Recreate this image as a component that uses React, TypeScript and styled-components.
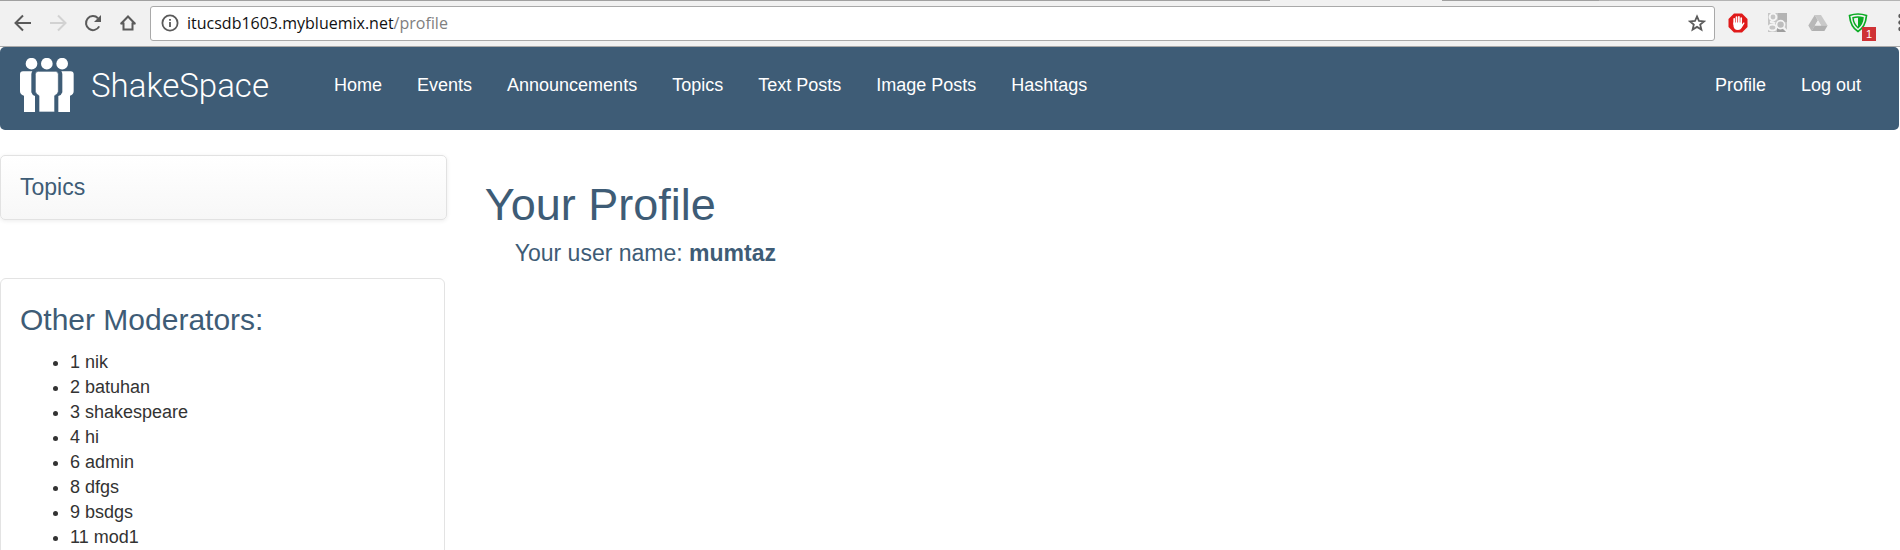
import React from "react";
import styled, { createGlobalStyle } from "styled-components";

const BLUE = "#3e5c76";
const UI_FONT = '"Liberation Sans", Arial, Helvetica, sans-serif';

const GlobalStyle = createGlobalStyle`
  *, *::before, *::after { box-sizing: border-box; }
  body {
    margin: 0;
    background: #fff;
    color: #333;
    font: 18px/25px ${UI_FONT};
  }
`;

const Page = styled.div`
  height: 100vh;
  overflow: hidden;
`;

/* Browser chrome */

const TabStrip = styled.div`
  display: flex;
  height: 1px;
  background: #f1f1f1;
`;

const TabEdge = styled.div<{ $grow: number; $color: string }>`
  flex: ${(p) => p.$grow} 1 0;
  background: ${(p) => p.$color};
`;

const BrowserBar = styled.div`
  display: flex;
  align-items: center;
  height: 46px;
  padding: 0 0 1px 14px;
  background: #f1f1f1;
  border-bottom: 1px solid #a9a9a9;
  overflow: hidden;
`;

const NavButtons = styled.div`
  display: flex;
  gap: 17px;
  margin-right: 13px;
`;

const IconButton = styled.button`
  position: relative;
  display: block;
  flex: none;
  padding: 0;
  border: 0;
  background: none;
  line-height: 0;
`;

const AddressBar = styled.form`
  display: flex;
  flex: 1;
  align-items: center;
  height: 35px;
  padding: 0 8px 0 10px;
  background: #fff;
  border: 1px solid #a9a9a9;
  border-radius: 3px;
  font: 16px/24px "Open Sans", "Noto Sans", sans-serif;
`;

const Host = styled.label`
  margin-left: 8px;
  color: #111;
`;

const PathInput = styled.input`
  flex: 1;
  min-width: 0;
  padding: 0;
  border: 0;
  outline: 0;
  background: none;
  color: #808080;
  font: inherit;
`;

const Extensions = styled.div`
  display: flex;
  gap: 20px;
  margin: 0 30px 0 13px;
`;

const Count = styled.span`
  position: absolute;
  right: -8px;
  bottom: -8px;
  width: 14px;
  background: #cf3235;
  color: #fff;
  font: 11px/14px ${UI_FONT};
  text-align: center;
`;

const MenuButton = styled(IconButton)`
  margin-right: -3px;
`;

/* Site */

const Site = styled.div`
  padding-right: 1px;
`;

const Navbar = styled.nav`
  display: flex;
  align-items: flex-start;
  height: 83px;
  padding: 11px 38px 0 20px;
  background: ${BLUE};
  border-radius: 5px;
`;

const Brand = styled.a`
  display: flex;
  gap: 17px;
  width: 314px;
  color: #fff;
  font: 300 33px/56px Roboto, sans-serif;
  text-decoration: none;
`;

const Links = styled.ul<{ $end?: boolean }>`
  display: flex;
  gap: 35px;
  margin: 15px 0 0 ${(p) => (p.$end ? "auto" : "0")};
  padding: 0;
  list-style: none;
`;

const NavLink = styled.a`
  color: #fff;
  text-decoration: none;
  white-space: nowrap;
`;

const Columns = styled.div`
  display: grid;
  grid-template-columns: 1fr 3fr;
  padding-top: 25px;
`;

const Sidebar = styled.aside`
  padding-right: 28px;
`;

const TopicsPanel = styled.section`
  padding: 19px;
  border: 1px solid #e2e2e2;
  border-radius: 5px;
  background: linear-gradient(#fff, #f7f7f7);
  box-shadow: 0 1px 4px rgba(0, 0, 0, 0.08);
`;

const ModeratorsPanel = styled.section`
  margin: 58px 2px 0 0;
  padding: 24px 19px;
  border: 1px solid #e3e3e3;
  border-radius: 6px;
`;

const Heading = styled.h3<{ $size: number; $line: number }>`
  margin: 0;
  color: ${BLUE};
  font-size: ${(p) => p.$size}px;
  line-height: ${(p) => p.$line}px;
  font-weight: 400;
`;

const ModeratorList = styled.ul`
  margin: 13px 0 0;
  padding-left: 50px;
`;

const Profile = styled.main`
  padding: 25px 10px;
`;

const UserName = styled(Heading)`
  margin: 11px 0 0 30px;
`;

const BackIcon = ({ color = "#5a5a5a", flip = false }) => (
  <svg width="18" height="18" viewBox="0 0 18 18" fill="none" stroke={color} strokeWidth="2">
    <path d={flip ? "M1 9H16M9 1.5L16.5 9L9 16.5" : "M17 9H2M9 1.5L1.5 9L9 16.5"} />
  </svg>
);

const ReloadIcon = () => (
  <svg width="18" height="18" viewBox="0 0 18 18">
    <path d="M15.2 12.4A7 7 0 1 1 14 4.2" fill="none" stroke="#5a5a5a" strokeWidth="2" />
    <path d="M17 1V8H10Z" fill="#5a5a5a" />
  </svg>
);

const HomeIcon = () => (
  <svg width="18" height="18" viewBox="0 0 18 18" fill="none" stroke="#5a5a5a" strokeWidth="2">
    <path d="M1.7 10L9 2.5L16.3 10M4.5 8.5V15.5H13.5V8.5M1.5 9.6H4.5M13.5 9.6H16.5" />
  </svg>
);

const InfoIcon = () => (
  <svg width="18" height="18" viewBox="0 0 18 18" fill="none" stroke="#5a5a5a">
    <circle cx="9" cy="9" r="7.6" strokeWidth="1.8" />
    <path d="M9 8V13M9 5V6.8" strokeWidth="1.8" />
  </svg>
);

const StarIcon = () => (
  <svg width="18" height="18" viewBox="0 0 18 18" fill="none" stroke="#5a5a5a" strokeWidth="1.8">
    <path d="M9 2.4L11 7L16 7.4L12.2 10.6L13.4 15.6L9 12.9L4.6 15.6L5.8 10.6L2 7.4L7 7Z" />
  </svg>
);

const HandIcon = () => (
  <svg width="20" height="20" viewBox="0 0 20 20">
    <path d="M6 .5H14L19.5 6V14L14 19.5H6L.5 14V6Z" fill="#e01a1a" />
    <path
      d="M6.2 11V5.8M8.5 10V4M10.9 10V3.8M13.2 10.5V5.2"
      stroke="#fff"
      strokeWidth="1.7"
      strokeLinecap="round"
    />
    <path d="M5.4 9.5H14V11.5L15.4 9.6Q16.8 9 16.4 10.4L13.6 15Q12.5 17 10 17Q5.4 17 5.4 12Z" fill="#fff" />
  </svg>
);

const ImageSearchIcon = () => (
  <svg width="20" height="20" viewBox="0 0 20 20">
    <path d="M0 0H19V19H0Z" fill="#c6c6c6" />
    <path d="M10 0H19V9H10Z" fill="#b4b4b4" />
    <path d="M9 15H13L19 19H9Z" fill="#9e9e9e" />
    <g fill="none" stroke="#f4f4f4" strokeWidth="2">
      <circle cx="5" cy="4" r="3.4" />
      <path d="M2 9Q5 8.5 7 10.5" />
      <ellipse cx="4.4" cy="14.6" rx="4" ry="3" />
    </g>
    <circle cx="12.6" cy="11.6" r="4" fill="#bdbdbd" stroke="#f4f4f4" strokeWidth="1.6" />
    <path d="M15.5 14.5L19.5 19" stroke="#f4f4f4" strokeWidth="2" />
  </svg>
);

const DriveIcon = () => (
  <svg width="20" height="20" viewBox="0 0 20 20">
    <path d="M6.7 2H13L19.6 12.5H13.2Z" fill="#c9c9c9" />
    <path d="M6.7 2L9.9 7.4L3.6 18L.3 12.6Z" fill="#b8b8b8" />
    <path d="M6.8 12.5H19.6L16.4 18H3.6Z" fill="#b0b0b0" />
    <path d="M9.9 7.4L13 12.5H6.8Z" fill="#eee" />
  </svg>
);

const ShieldIcon = () => (
  <svg width="20" height="20" viewBox="0 0 20 20" fill="none" stroke="#0aab23">
    <path d="M1.5 2.5Q10 -.5 18.5 2.5Q17.5 14 10 18.5Q2.5 14 1.5 2.5Z" strokeWidth="1.7" />
    <path d="M5 4.8Q10 3.4 15 4.8Q14.5 11 10 14.8Q5.5 11 5 4.8Z" strokeWidth="1.5" />
    <path d="M10 4.2Q13 4.2 15 4.8Q14.5 11 10 14.8Z" fill="#0aab23" stroke="none" />
  </svg>
);

const MenuIcon = () => (
  <svg width="5" height="20" viewBox="0 0 5 20" fill="#5a5a5a">
    <circle cx="2.5" cy="3" r="2.2" />
    <circle cx="2.5" cy="9.5" r="2.2" />
    <circle cx="2.5" cy="16" r="2.2" />
  </svg>
);

const PeopleIcon = () => (
  <svg width="54" height="54" viewBox="60 54 162 162" fill="#fff">
    <circle cx="94.5" cy="71" r="17.5" />
    <circle cx="140.5" cy="71" r="17.5" />
    <circle cx="186.5" cy="71" r="17.5" />
    <path d="M69 94H97Q94 98 94 103V157Q96 165 105 168V216H72V167Q60 164 60 154V103Q60 94 69 94Z" />
    <path
      d="M115 94H166Q175 94 175 103V154Q174 163 164 167V216H117V167Q107 163 106 154V103Q106 94 115 94Z"
      stroke={BLUE}
      strokeWidth="2"
    />
    <path d="M212 94H184Q187 98 187 103V157Q185 165 175 168V216H210V167Q221 164 221 154V103Q221 94 212 94Z" />
  </svg>
);

const extensions = [
  { name: "Ad blocker", icon: <HandIcon /> },
  { name: "Search by image", icon: <ImageSearchIcon /> },
  { name: "Drive", icon: <DriveIcon /> },
  { name: "Protection", icon: <ShieldIcon />, count: 1 },
];

const links = ["Home", "Events", "Announcements", "Topics", "Text Posts", "Image Posts", "Hashtags"];
const accountLinks = ["Profile", "Log out"];
const moderators = ["1 nik", "2 batuhan", "3 shakespeare", "4 hi", "6 admin", "8 dfgs", "9 bsdgs", "11 mod1"];

const LinkItems = ({ items }: { items: string[] }) => (
  <>
    {items.map((item) => (
      <li key={item}>
        <NavLink href={"#" + item.toLowerCase().replace(" ", "-")}>{item}</NavLink>
      </li>
    ))}
  </>
);

export default function App() {
  return (
    <Page>
      <GlobalStyle />
      <TabStrip>
        <TabEdge $grow={1270} $color="#a0a0a0" />
        <TabEdge $grow={172} $color="#f1f1f1" />
        <TabEdge $grow={157} $color="#a0a0a0" />
        <TabEdge $grow={301} $color="#b4b4b4" />
      </TabStrip>
      <BrowserBar>
        <NavButtons>
          <IconButton aria-label="Back"><BackIcon /></IconButton>
          <IconButton aria-label="Forward" disabled><BackIcon color="#d2d2d2" flip /></IconButton>
          <IconButton aria-label="Reload"><ReloadIcon /></IconButton>
          <IconButton aria-label="Home page"><HomeIcon /></IconButton>
        </NavButtons>
        <AddressBar onSubmit={(e) => e.preventDefault()}>
          <IconButton type="button" aria-label="Site information"><InfoIcon /></IconButton>
          <Host htmlFor="path">itucsdb1603.mybluemix.net</Host>
          <PathInput id="path" defaultValue="/profile" />
          <IconButton type="button" aria-label="Bookmark"><StarIcon /></IconButton>
        </AddressBar>
        <Extensions>
          {extensions.map((ext) => (
            <IconButton key={ext.name} aria-label={ext.name}>
              {ext.icon}
              {ext.count && <Count>{ext.count}</Count>}
            </IconButton>
          ))}
        </Extensions>
        <MenuButton aria-label="Menu"><MenuIcon /></MenuButton>
      </BrowserBar>
      <Site>
        <Navbar>
          <Brand href="#home">
            <PeopleIcon />
            ShakeSpace
          </Brand>
          <Links><LinkItems items={links} /></Links>
          <Links $end><LinkItems items={accountLinks} /></Links>
        </Navbar>
        <Columns>
          <Sidebar>
            <TopicsPanel>
              <Heading as="h4" $size={23} $line={25}>Topics</Heading>
            </TopicsPanel>
            <ModeratorsPanel>
              <Heading $size={30} $line={34}>Other Moderators:</Heading>
              <ModeratorList>
                {moderators.map((m) => <li key={m}>{m}</li>)}
              </ModeratorList>
            </ModeratorsPanel>
          </Sidebar>
          <Profile>
            <Heading as="h1" $size={45} $line={50}>Your Profile</Heading>
            <UserName as="h4" $size={23} $line={25}>
              Your user name: <strong>mumtaz</strong>
            </UserName>
          </Profile>
        </Columns>
      </Site>
    </Page>
  );
}
